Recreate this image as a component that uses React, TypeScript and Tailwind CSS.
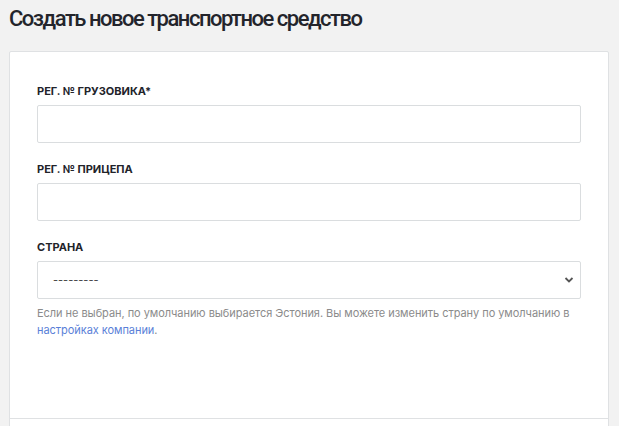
export default function App() {
  return (
    <div className="min-h-screen bg-[#f2f2f2] font-['Inter',sans-serif] overflow-hidden">
      <h1 className="pl-[9px] pt-[4px] h-[51px] text-[22px] leading-[30px] font-medium font-['Roboto',sans-serif] text-[#23242b] tracking-[-1.5px]">
        Создать новое транспортное средство
      </h1>
      <div className="ml-[9px] mr-[10px] bg-white border border-[#dfe1e3] rounded-[2px]">
        <div className="px-[27px] pt-[31px] h-[366px]">
          <div>
            <label className="block text-[11px] leading-[16px] font-bold text-[#22232a]">РЕГ. № ГРУЗОВИКА*</label>
            <input className="mt-[6px] block w-full h-[38px] border border-[#dadddf] rounded-[2px] px-[15px] text-[13px] outline-none" />
          </div>
          <div className="mt-[18px]">
            <label className="block text-[11px] leading-[16px] font-bold text-[#22232a]">РЕГ. № ПРИЦЕПА</label>
            <input className="mt-[6px] block w-full h-[38px] border border-[#dadddf] rounded-[2px] px-[15px] text-[13px] outline-none" />
          </div>
          <div className="mt-[18px]">
            <label className="block text-[11px] leading-[16px] font-bold text-[#22232a]">СТРАНА</label>
            <div className="relative mt-[6px]">
              <select className="block w-full h-[38px] appearance-none border border-[#dadddf] rounded-[2px] bg-white px-[15px] text-[11px] text-[#444] outline-none">
                <option>---------</option>
              </select>
              <svg className="absolute right-[7px] top-[15px] pointer-events-none" width="10" height="8" viewBox="0 0 10 8">
                <path d="M1.5 2 L5 5.5 L8.5 2" fill="none" stroke="#555" strokeWidth="1.8" />
              </svg>
            </div>
            <p className="mt-[6px] text-[11px] leading-[17px] text-[#8b8b8b] tracking-[-0.05px]">
              Если не выбран, по умолчанию выбирается Эстония. Вы можете изменить страну по умолчанию в{" "}
              <a className="text-[#5a7fd8]">настройках компании</a>.
            </p>
          </div>
        </div>
        <div className="border-t border-[#dfe1e3] h-[60px]" />
      </div>
    </div>
  );
}
